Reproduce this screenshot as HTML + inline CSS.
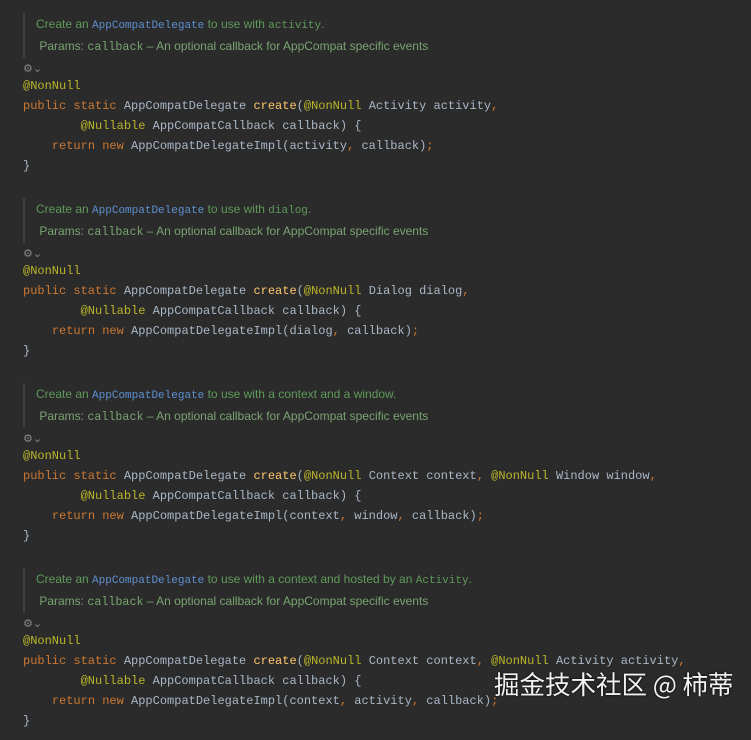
<!DOCTYPE html>
<html><head><meta charset="utf-8"><style>
body{margin:0;background:#2b2b2b;width:751px;height:720px;overflow:hidden;position:relative}
.b{position:absolute;left:0;width:751px;height:185px}
.bar{position:absolute;left:23px;top:13px;width:2px;height:45px;background:#3c3f41}
.doc{position:absolute;left:36px;font:12px "Liberation Sans",sans-serif;color:#5f9a5a;white-space:pre;line-height:15px}
.doc .m{font-family:"Liberation Mono",monospace;font-size:11px}
.doc .m2{font-family:"Liberation Mono",monospace;font-size:11.7px}
.lk{color:#5d8fd0}
.pl{color:#79a471}
.ic{position:absolute;left:23px;top:62px;font:11px "DejaVu Sans",sans-serif;color:#888}
.c{position:absolute;left:23px;font:12px/20px "Liberation Mono",monospace;color:#a9b7c6;white-space:pre}
.k{color:#cc7832}.a{color:#bbb529}.f{color:#ffc66d}
.wm{position:absolute;left:494px;top:665px;font:25.5px "Noto Sans CJK SC",sans-serif;color:#f2f2f2;text-shadow:0 0 2px #000}
</style></head><body>

<div class="b" style="top:0">
<div class="bar"></div>
<div class="doc" style="top:17px">Create an <span class="lk m">AppCompatDelegate</span> to use with <span class="m">activity</span>.</div>
<div class="doc pl" style="top:39px"> Params: <span class="m2">callback</span> – An optional callback for AppCompat specific events</div>
<div class="ic">⚙⌄</div>
<div class="c" style="top:76px"><span class="a">@NonNull</span>
<span class="k">public static </span>AppCompatDelegate <span class="f">create</span>(<span class="a">@NonNull </span>Activity activity<span class="k">,</span>
        <span class="a">@Nullable </span>AppCompatCallback callback) {
    <span class="k">return new </span>AppCompatDelegateImpl(activity<span class="k">, </span>callback)<span class="k">;</span>
}</div>
</div>

<div class="b" style="top:185px">
<div class="bar"></div>
<div class="doc" style="top:17px">Create an <span class="lk m">AppCompatDelegate</span> to use with <span class="m">dialog</span>.</div>
<div class="doc pl" style="top:39px"> Params: <span class="m2">callback</span> – An optional callback for AppCompat specific events</div>
<div class="ic">⚙⌄</div>
<div class="c" style="top:76px"><span class="a">@NonNull</span>
<span class="k">public static </span>AppCompatDelegate <span class="f">create</span>(<span class="a">@NonNull </span>Dialog dialog<span class="k">,</span>
        <span class="a">@Nullable </span>AppCompatCallback callback) {
    <span class="k">return new </span>AppCompatDelegateImpl(dialog<span class="k">, </span>callback)<span class="k">;</span>
}</div>
</div>

<div class="b" style="top:370px">
<div class="bar"></div>
<div class="doc" style="top:17px">Create an <span class="lk m">AppCompatDelegate</span> to use with a context and a window.</div>
<div class="doc pl" style="top:39px"> Params: <span class="m2">callback</span> – An optional callback for AppCompat specific events</div>
<div class="ic">⚙⌄</div>
<div class="c" style="top:76px"><span class="a">@NonNull</span>
<span class="k">public static </span>AppCompatDelegate <span class="f">create</span>(<span class="a">@NonNull </span>Context context<span class="k">, </span><span class="a">@NonNull </span>Window window<span class="k">,</span>
        <span class="a">@Nullable </span>AppCompatCallback callback) {
    <span class="k">return new </span>AppCompatDelegateImpl(context<span class="k">, </span>window<span class="k">, </span>callback)<span class="k">;</span>
}</div>
</div>

<div class="b" style="top:555px">
<div class="bar"></div>
<div class="doc" style="top:17px">Create an <span class="lk m">AppCompatDelegate</span> to use with a context and hosted by an <span class="m">Activity</span>.</div>
<div class="doc pl" style="top:39px"> Params: <span class="m2">callback</span> – An optional callback for AppCompat specific events</div>
<div class="ic">⚙⌄</div>
<div class="c" style="top:76px"><span class="a">@NonNull</span>
<span class="k">public static </span>AppCompatDelegate <span class="f">create</span>(<span class="a">@NonNull </span>Context context<span class="k">, </span><span class="a">@NonNull </span>Activity activity<span class="k">,</span>
        <span class="a">@Nullable </span>AppCompatCallback callback) {
    <span class="k">return new </span>AppCompatDelegateImpl(context<span class="k">, </span>activity<span class="k">, </span>callback)<span class="k">;</span>
}</div>
</div>

<div class="wm">掘金技术社区 @ 柿蒂</div>
</body></html>
